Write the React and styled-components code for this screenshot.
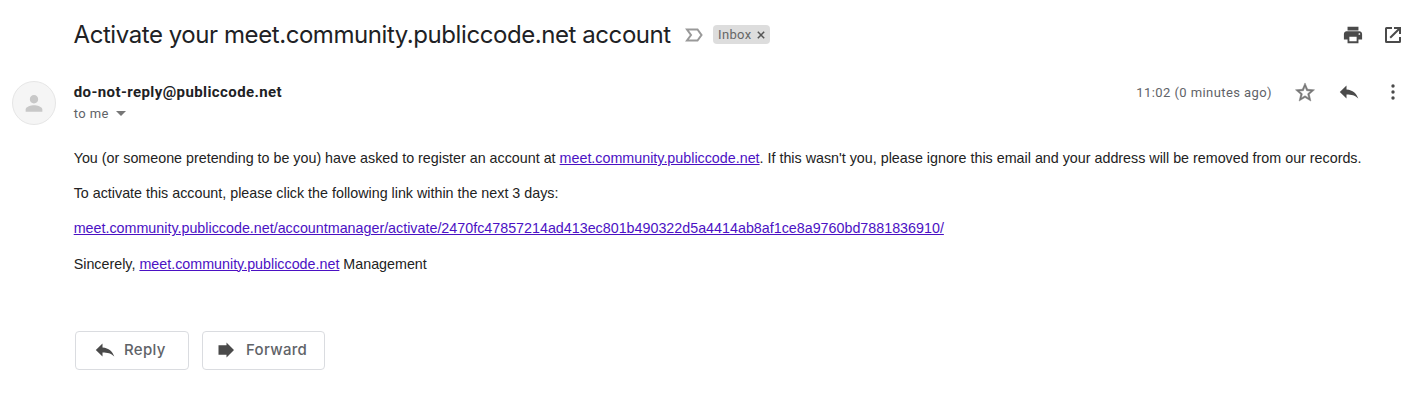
import React from 'react';
import styled, { createGlobalStyle } from 'styled-components';

const Global = createGlobalStyle`
  *{box-sizing:border-box}
  body{margin:0;background:#fff;color:#202124;font-family:Roboto,sans-serif}
  p{margin:0}
`;
const Page = styled.main`width:1421px;height:407px;overflow:hidden;display:flex;flex-direction:column;`;
const Header = styled.header`display:flex;align-items:center;height:41px;margin-top:14px;padding:0 18px 0 73.5px;`;
const Title = styled.h1`margin:0;padding-top:1px;font:400 24px/32px Inter,sans-serif;width:597.5px;white-space:nowrap;letter-spacing:-.43px;`;
const Important = styled.svg`margin-left:13px;flex:none;`;
const Label = styled.span`display:flex;align-items:center;gap:5px;height:19px;width:57px;margin-left:9px;padding:0 5px;border-radius:4px;background:#ddd;color:#666;font-size:13px;letter-spacing:.35px;`;
const Actions = styled.div`display:flex;align-items:center;gap:20px;margin-left:auto;`;
const Icon = styled.svg`width:20px;height:20px;flex:none;fill:${p => p.$c || '#4a4a4a'};`;
const Message = styled.section`display:flex;margin-top:26px;padding-left:12px;`;
const Avatar = styled.div`width:44px;height:44px;border-radius:50%;background:#f5f5f5;border:1px solid #e6e6e6;display:grid;place-items:center;`;
const Content = styled.div`flex:1;margin-left:17.7px;`;
const SenderRow = styled.div`display:flex;height:22px;align-items:center;padding-right:18px;`;
const Sender = styled.strong`font-size:15px;letter-spacing:.41px;`;
const Time = styled.span`margin-left:auto;margin-right:23px;color:#5f6368;font-size:13px;letter-spacing:.42px;`;
const ActionGroup = styled.div`display:flex;gap:24px;`;
const Recipient = styled.div`display:flex;align-items:center;height:20px;color:#5f6368;font-size:13px;letter-spacing:.42px;gap:7px;`;
const Body = styled.div`margin-top:25px;font:14.305px/21px "Liberation Sans",sans-serif;color:#222;white-space:nowrap;display:flex;flex-direction:column;gap:14.2px;`;
const Link = styled.a`color:#4b11c4;text-decoration:underline;`;
const Replies = styled.div`display:flex;gap:13px;margin-top:56.4px;padding-left:1.3px;`;
const Button = styled.button`width:${p => p.$w}px;height:39px;padding:0 0 0 ${p => p.$p}px;border:1px solid #dadce0;border-radius:4px;background:#fff;color:#5f6368;font:500 15px Inter,sans-serif;letter-spacing:.3px;display:flex;align-items:center;gap:${p => p.$gap}px;`;
const ButtonText = styled.span`padding-bottom:2px;`;
const ReplyIcon = () => <Icon viewBox="0 0 20 20"><path d="M7.5 3.5v4C14 8 17.4 11.5 19.3 16.5 16 13.3 12.5 12.5 7.5 12.5v4L.8 10z"/></Icon>;

export default function App() {
  return <><Global/><Page>
    <Header>
      <Title>Activate your meet.community.publiccode.net account</Title>
      <Important width="20" height="20" viewBox="0 0 20 20" fill="none" stroke="#999" strokeWidth="2"><path d="M3 4.5h10.5l4 5.5-4 5.5H3L7 10z"/></Important>
      <Label>Inbox <svg width="8" height="8" viewBox="0 0 8 8" stroke="#555" strokeWidth="1.5"><path d="M.8.8l6.4 6.4M7.2.8L.8 7.2"/></svg></Label>
      <Actions>
        <Icon viewBox="1 1 22 22"><path d="M19 8H5c-1.66 0-3 1.34-3 3v6h4v4h12v-4h4v-6c0-1.66-1.34-3-3-3zm-3 11H8v-5h8v5zm3-7c-.55 0-1-.45-1-1s.45-1 1-1 1 .45 1 1-.45 1-1 1zm-1-9H6v4h12V3z"/></Icon>
        <Icon viewBox="0 0 20 20"><path d="M9 2v2H4v12h12v-4h2v4.5a1.5 1.5 0 0 1-1.5 1.5h-13A1.5 1.5 0 0 1 2 16.500v-13A1.500 1.500 0 0 1 3.500 2zM11 2h7v7h-2V5.400l-8.100 8.100-1.400-1.400L14.600 4H11z"/></Icon>
      </Actions>
    </Header>
    <Message><Avatar><Icon $c="#c8c8c8" viewBox="1 0 22 23"><path d="M12 12c2.7 0 4.8-2.1 4.8-4.8S14.7 2.4 12 2.4 7.2 4.5 7.2 7.2 9.3 12 12 12zm0 2c-3.2 0-9.6 1.6-9.6 4.8v2.8h19.2v-2.8c0-3.2-6.4-4.8-9.6-4.8z"/></Icon></Avatar>
      <Content>
        <SenderRow><Sender>do-not-reply@publiccode.net</Sender><Time>11:02 (0 minutes ago)</Time><ActionGroup>
          <Icon $c="#777" viewBox="1.5 1 21 21" stroke="#777" strokeWidth=".5"><path d="M22 9.24l-7.19-.62L12 2 9.19 8.63 2 9.24l5.46 4.73L5.82 21 12 17.27 18.18 21l-1.63-7.03L22 9.24zM12 15.4l-3.76 2.27 1-4.28-3.32-2.88 4.38-.38L12 6.1l1.71 4.04 4.38.38-3.32 2.88 1 4.28L12 15.4z"/></Icon>
          <ReplyIcon/><Icon viewBox="0 0 20 20"><circle cx="10" cy="4" r="1.7"/><circle cx="10" cy="10" r="1.7"/><circle cx="10" cy="16" r="1.7"/></Icon>
        </ActionGroup></SenderRow>
        <Recipient>to me <svg width="10" height="5" viewBox="0 0 10 5" fill="#777"><path d="M0 0h10L5 5z"/></svg></Recipient>
        <Body><p>You (or someone pretending to be you) have asked to register an account at <Link>meet.community.publiccode.net</Link>. If this wasn't you, please ignore this email and your address will be removed from our records.</p><p>To activate this account, please click the following link within the next 3 days:</p><p><Link>meet.community.publiccode.net/accountmanager/activate/2470fc47857214ad413ec801b490322d5a4414ab8af1ce8a9760bd7881836910/</Link></p><p>Sincerely, <Link>meet.community.publiccode.net</Link> Management</p></Body>
        <Replies><Button $w={114} $p={19} $gap={9}><ReplyIcon/><ButtonText>Reply</ButtonText></Button><Button $w={123} $p={13} $gap={10}><Icon viewBox="0 0 20 20"><path d="M2.5 5.2h8V2.5l7.5 7.5-7.5 7.5v-2.7h-8z"/></Icon><ButtonText>Forward</ButtonText></Button></Replies>
      </Content>
    </Message>
  </Page></>;
}
